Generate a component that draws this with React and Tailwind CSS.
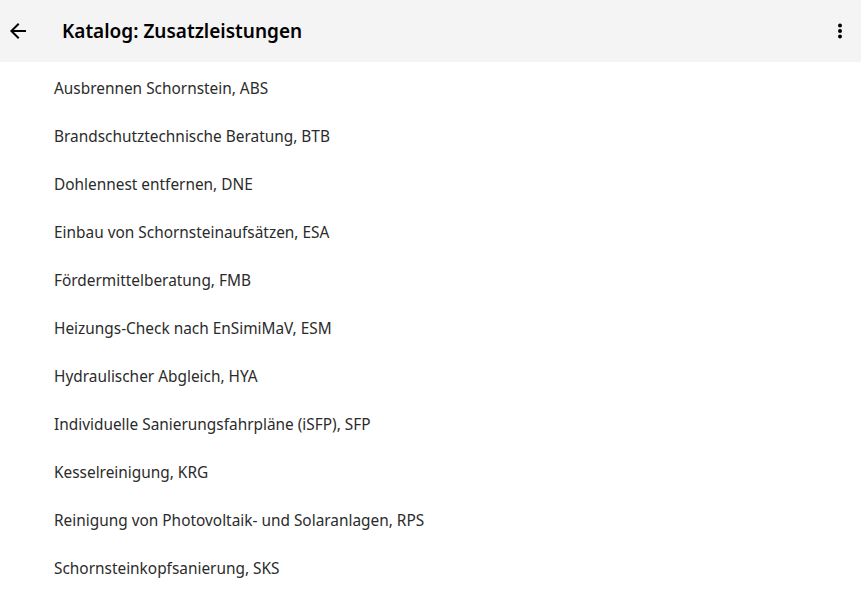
import React from "react";

const items = [
  "Ausbrennen Schornstein, ABS",
  "Brandschutztechnische Beratung, BTB",
  "Dohlennest entfernen, DNE",
  "Einbau von Schornsteinaufsätzen, ESA",
  "Fördermittelberatung, FMB",
  "Heizungs-Check nach EnSimiMaV, ESM",
  "Hydraulischer Abgleich, HYA",
  "Individuelle Sanierungsfahrpläne (iSFP), SFP",
  "Kesselreinigung, KRG",
  "Reinigung von Photovoltaik- und Solaranlagen, RPS",
  "Schornsteinkopfsanierung, SKS",
];

const App = () => {
  return (
    <div className="w-[861px] h-[595px] overflow-hidden bg-white font-['Noto_Sans',sans-serif]">
      {/* Header */}
      <div className="flex items-center h-[62px] bg-[#f4f4f4]">
        <button className="w-[24px] h-[24px] ml-[6px] flex items-center justify-center text-black">
          <svg width="24" height="24" viewBox="0 0 24 24" fill="currentColor">
            <path d="M20 11H7.83l5.59-5.59L12 4l-8 8 8 8 1.41-1.41L7.83 13H20v-2z" />
          </svg>
        </button>
        <h1 className="ml-[32px] text-[19px] font-semibold text-black">
          Katalog: Zusatzleistungen
        </h1>
        <div className="flex-1" />
        <button className="w-[36px] h-[36px] mr-[3px] flex items-center justify-center text-black">
          <svg width="24" height="24" viewBox="0 0 24 24" fill="currentColor">
            <circle cx="12" cy="6.5" r="2" />
            <circle cx="12" cy="12" r="2" />
            <circle cx="12" cy="17.5" r="2" />
          </svg>
        </button>
      </div>

      {/* List */}
      <ul className="pt-[3px]">
        {items.map((item) => (
          <li key={item} className="h-12 flex items-center pl-[54px] text-[15.4px] text-[#2b2b2b]">
            {item}
          </li>
        ))}
      </ul>
    </div>
  );
};

export default App;
